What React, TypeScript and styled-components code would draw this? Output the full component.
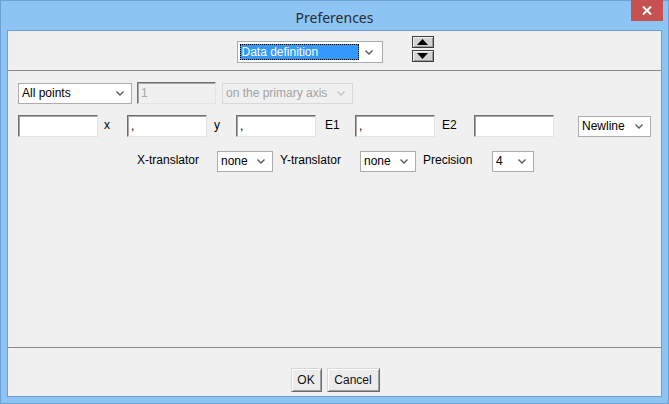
import styled, { createGlobalStyle } from "styled-components";

const Global = createGlobalStyle`
  html, body {
    margin: 0;
    padding: 0;
    background: #8cc4f4;
  }
  * {
    box-sizing: border-box;
  }
`;

export default function App() {
  return (
    <>
      <Global />
      <Window>
        <TitleBar>
          <Title>Preferences</Title>
          <CloseButton>
            <svg width="10" height="9" viewBox="0 0 10 9">
              <path d="M1 0.5 L9 8.5 M9 0.5 L1 8.5" stroke="#fff" strokeWidth="2" />
            </svg>
          </CloseButton>
        </TitleBar>
        <Client>
          <TopPanel>
            <Combo $w={146} $h={22} $mt={10} $focused>
              <Highlight>Data definition</Highlight>
              <Chevron />
            </Combo>
            <Spinner>
              <SpinButton>
                <svg width="11" height="6" viewBox="0 0 11 6">
                  <path d="M5.5 0 L11 6 L0 6 Z" fill="#000" />
                </svg>
              </SpinButton>
              <SpinButton>
                <svg width="11" height="6" viewBox="0 0 11 6">
                  <path d="M0 0 L11 0 L5.5 6 Z" fill="#000" />
                </svg>
              </SpinButton>
            </Spinner>
          </TopPanel>

          <MiddlePanel>
            <Row>
              <Combo $w={114} $h={21}>
                <ComboText>All points</ComboText>
                <Chevron />
              </Combo>
              <Gap $w={5} />
              <Field $w={79} $disabled defaultValue="1" readOnly />
              <Gap $w={6} />
              <Combo $w={131} $h={21} $disabled>
                <ComboText>on the primary axis</ComboText>
                <Chevron $disabled />
              </Combo>
            </Row>

            <Row $mt={11}>
              <Field $w={80} defaultValue="" readOnly />
              <Label $w={29} $pl={6}>x</Label>
              <Field $w={80} defaultValue="," readOnly />
              <Label $w={29} $pl={7}>y</Label>
              <Field $w={80} defaultValue="," readOnly />
              <Label $w={39} $pl={9}>E1</Label>
              <Field $w={80} defaultValue="," readOnly />
              <Label $w={39} $pl={7}>E2</Label>
              <Field $w={80} defaultValue="" readOnly />
              <Gap $w={24} />
              <Combo $w={73} $h={21}>
                <ComboText>Newline</ComboText>
                <Chevron />
              </Combo>
            </Row>

            <Row $mt={13} $pl={119}>
              <Label $w={80}>X-translator</Label>
              <Combo $w={56} $h={21}>
                <ComboText>none</ComboText>
                <Chevron />
              </Combo>
              <Gap $w={7} />
              <Label $w={80}>Y-translator</Label>
              <Combo $w={56} $h={21}>
                <ComboText>none</ComboText>
                <Chevron />
              </Combo>
              <Gap $w={7} />
              <Label $w={69}>Precision</Label>
              <Combo $w={42} $h={21}>
                <ComboText>4</ComboText>
                <Chevron />
              </Combo>
            </Row>
          </MiddlePanel>

          <BottomPanel>
            <Button $w={31}>OK</Button>
            <Button $w={53}>Cancel</Button>
          </BottomPanel>
        </Client>
      </Window>
    </>
  );
}

function Chevron(props: { $disabled?: boolean }) {
  return (
    <ChevronBox>
      <svg width="8" height="5" viewBox="0 0 8 5">
        <path
          d="M0.5 0.5 L4 4 L7.5 0.5"
          fill="none"
          stroke={props.$disabled ? "#c4c4c4" : "#5a5a5a"}
          strokeWidth="1.4"
        />
      </svg>
    </ChevronBox>
  );
}

const Window = styled.div`
  width: 669px;
  height: 404px;
  background: #8cc4f4;
  border: 1px solid #6f9fd6;
  display: flex;
  flex-direction: column;
  font-family: "Liberation Sans", Arial, sans-serif;
  font-size: 12px;
  color: #000;
`;

const TitleBar = styled.div`
  position: relative;
  height: 29px;
  flex: none;
  display: flex;
  align-items: center;
  justify-content: center;
`;

const Title = styled.div`
  font-family: "Noto Sans", "Open Sans", sans-serif;
  font-size: 14px;
  color: #2b2b2b;
  margin-top: 3px;
`;

const CloseButton = styled.div`
  position: absolute;
  top: -1px;
  right: 5px;
  width: 32px;
  height: 21px;
  background: #c75050;
  display: flex;
  align-items: center;
  justify-content: center;
`;

const Client = styled.div`
  flex: none;
  height: 367px;
  margin: 0 6px;
  border: 1px solid #6e9dd3;
  background: #f0f0f0;
  display: flex;
  flex-direction: column;
`;

const TopPanel = styled.div`
  height: 40px;
  flex: none;
  border-bottom: 1px solid #8a8a8a;
  display: flex;
  justify-content: center;
  align-items: flex-start;
  gap: 29px;
  padding-left: 1px;
`;

const MiddlePanel = styled.div`
  height: 277px;
  flex: none;
  border-bottom: 1px solid #8a8a8a;
  padding: 11px 0 0 10px;
  display: flex;
  flex-direction: column;
`;

const BottomPanel = styled.div`
  flex: 1;
  display: flex;
  justify-content: center;
  align-items: flex-start;
  gap: 5px;
  padding-top: 20px;
  padding-left: 1px;
`;

const Row = styled.div<{ $mt?: number; $pl?: number }>`
  display: flex;
  align-items: center;
  height: 22px;
  margin-top: ${(p) => p.$mt ?? 0}px;
  padding-left: ${(p) => p.$pl ?? 0}px;
`;

const Gap = styled.div<{ $w: number }>`
  width: ${(p) => p.$w}px;
  flex: none;
`;

const Label = styled.div<{ $w: number; $pl?: number }>`
  width: ${(p) => p.$w}px;
  padding-left: ${(p) => p.$pl ?? 0}px;
  flex: none;
  white-space: nowrap;
  line-height: 14px;
  margin-top: -2px;
`;

const Field = styled.input<{ $w: number; $disabled?: boolean }>`
  width: ${(p) => p.$w}px;
  height: 22px;
  flex: none;
  margin: 0;
  padding: 0 3px;
  font: inherit;
  font-size: 12px;
  color: ${(p) => (p.$disabled ? "#a8a8a8" : "#000")};
  background: ${(p) => (p.$disabled ? "#f0f0f0" : "#fff")};
  border: 1px solid;
  border-color: #6e6e6e #e4e4e4 #e4e4e4 #6e6e6e;
  box-shadow: inset 1px 1px 0 #a8a8a8;
  outline: none;
`;

const Combo = styled.div<{
  $w: number;
  $h: number;
  $mt?: number;
  $disabled?: boolean;
  $focused?: boolean;
}>`
  width: ${(p) => p.$w}px;
  height: ${(p) => p.$h}px;
  margin-top: ${(p) => p.$mt ?? 0}px;
  flex: none;
  display: flex;
  align-items: center;
  background: ${(p) => (p.$disabled ? "#f0f0f0" : "#fff")};
  border: 1px solid ${(p) => (p.$disabled ? "#d9d9d9" : "#acacac")};
  color: ${(p) => (p.$disabled ? "#a3a3a3" : "#000")};
  padding: ${(p) => (p.$focused ? "2px" : "0")};
`;

const ComboText = styled.div`
  flex: 1;
  padding-left: 3px;
  white-space: nowrap;
  overflow: hidden;
`;

const Highlight = styled.div`
  flex: 1;
  align-self: stretch;
  background: #3399ff;
  color: #fff;
  border: 1px dotted #c27a2a;
  outline: 1px dotted #000;
  outline-offset: -1px;
  padding-left: 1px;
  display: flex;
  align-items: center;
  margin-right: 6px;
`;

const ChevronBox = styled.div`
  width: 12px;
  flex: none;
  display: flex;
  align-items: center;
  padding-top: 1px;
  margin-right: 3px;
`;

const Spinner = styled.div`
  display: flex;
  flex-direction: column;
  gap: 2px;
  margin-top: 5px;
`;

const SpinButton = styled.div`
  width: 22px;
  height: 12px;
  background: #d2d2d2;
  border: 1px solid #3d3d3d;
  box-shadow: inset 1px 1px 0 #f4f4f4, inset -1px -1px 0 #9a9a9a;
  display: flex;
  align-items: center;
  justify-content: center;
`;

const Button = styled.div<{ $w: number }>`
  width: ${(p) => p.$w}px;
  height: 24px;
  background: #ececec;
  border: 1px solid;
  border-color: #d8d8d8 #6a6a6a #6a6a6a #d8d8d8;
  box-shadow: inset 1px 1px 0 #ffffff, inset -1px -1px 0 #a0a0a0;
  display: flex;
  align-items: center;
  justify-content: center;
  color: #111;
`;
